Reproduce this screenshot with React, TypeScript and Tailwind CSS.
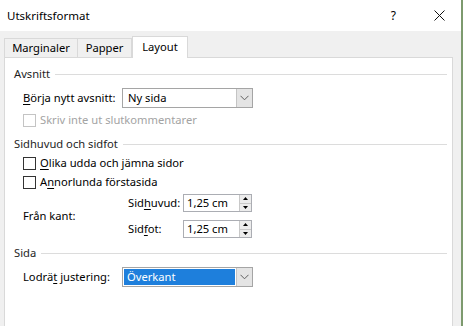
import React from 'react';

const font = { fontFamily: '"Noto Sans", "Liberation Sans", sans-serif' };

// Access-key underline letter
const U: React.FC<{ children: React.ReactNode }> = ({ children }) => (
    <span className="underline underline-offset-2 decoration-1">{children}</span>
);

const GroupHeader: React.FC<{ title: string }> = ({ title }) => (
    <div className="h-[16px] flex items-center pl-[9px] pr-[5px]">
        <span className="text-[#1e1e1e] whitespace-nowrap">{title}</span>
        <div className="flex-1 h-px bg-[#dcdcdc] ml-[5px]" />
    </div>
);

const Checkbox: React.FC<{ label: React.ReactNode; disabled?: boolean }> = ({ label, disabled }) => (
    <div className="h-[14px] flex items-center pl-[18px]">
        <div className={`w-[13px] h-[13px] shrink-0 border bg-white ${disabled ? 'border-[#c4c4c4]' : 'border-[#333333]'}`} />
        <span className={`ml-[4px] whitespace-nowrap ${disabled ? 'text-[#a3a3a3]' : 'text-black'}`}>{label}</span>
    </div>
);

const Chevron = () => (
    <svg width="9" height="6" viewBox="0 0 9 6" fill="none">
        <path d="M0.5 0.8 L4.5 4.8 L8.5 0.8" stroke="#606060" strokeWidth="1" />
    </svg>
);

const Select: React.FC<{ value: string; selected?: boolean }> = ({ value, selected }) => (
    <div className="w-[131px] h-[20px] shrink-0 border border-[#a5a5a5] bg-white flex">
        <div className="flex-1 flex items-center p-[1px]">
            {selected ? (
                <div className="h-full w-full bg-[#1e7fdc] text-white flex items-center pl-[3px]">{value}</div>
            ) : (
                <span className="pl-[4px]">{value}</span>
            )}
        </div>
        <div className="w-[16px] bg-[#e4e4e4] border-l border-[#c4c4c4] flex items-center justify-center">
            <Chevron />
        </div>
    </div>
);

const Spin: React.FC<{ value: string }> = ({ value }) => (
    <div className="w-[69px] h-[18px] shrink-0 border border-[#abadb3] bg-white flex">
        <span className="flex-1 pl-[3px] leading-[16px] whitespace-nowrap">{value}</span>
        <div className="w-[12px] flex flex-col border-l border-[#c8c8c8]">
            <div className="flex-1 bg-[#ececec] border-b border-[#c8c8c8] flex items-center justify-center">
                <svg width="5" height="3" viewBox="0 0 5 3"><path d="M0 3 L2.5 0 L5 3 Z" fill="#000" /></svg>
            </div>
            <div className="flex-1 bg-[#ececec] flex items-center justify-center">
                <svg width="5" height="3" viewBox="0 0 5 3"><path d="M0 0 L2.5 3 L5 0 Z" fill="#000" /></svg>
            </div>
        </div>
    </div>
);

export default function App() {
    return (
        <div className="w-[463px] h-[326px] flex overflow-hidden bg-white text-[11.2px] text-black" style={font}>
            <div className="flex-1 flex flex-col">
                {/* Title bar */}
                <div className="h-[31px] shrink-0 bg-white flex items-center pl-[7px]">
                    <span className="text-[11.5px]">Utskriftsformat</span>
                    <span className="ml-auto mr-[38px] text-[12px]">?</span>
                    <svg width="11" height="11" viewBox="0 0 11 11" className="mr-[16px]">
                        <path d="M0.5 0.5 L10.5 10.5 M10.5 0.5 L0.5 10.5" stroke="#111" strokeWidth="1" />
                    </svg>
                </div>

                <div className="flex-1 bg-[#f0f0f0] pl-[4px] pr-[8px] pt-[5px] flex flex-col">
                    {/* Tabs */}
                    <div className="flex items-end h-[22px] relative z-10 -mb-px">
                        <div className="w-[74px] h-[20px] border border-[#d9d9d9] border-b-0 flex items-center justify-center">Marginaler</div>
                        <div className="w-[54px] h-[20px] border-t border-r border-[#d9d9d9] flex items-center justify-center">Papper</div>
                        <div className="w-[56px] h-[22px] border border-[#d9d9d9] border-b-0 bg-white flex items-center justify-center pb-[1px]">Layout</div>
                    </div>

                    {/* Panel */}
                    <div className="flex-1 bg-white border border-[#d9d9d9] border-b-0 pt-[8px] flex flex-col">
                        <GroupHeader title="Avsnitt" />
                        <div className="mt-[6px] h-[20px] flex items-center pl-[18px]">
                            <span className="w-[99px] shrink-0 whitespace-nowrap"><U>B</U>örja nytt avsnitt:</span>
                            <Select value="Ny sida" />
                        </div>
                        <div className="mt-[5px]">
                            <Checkbox disabled label="Skriv inte ut slutkommentarer" />
                        </div>

                        <div className="mt-[9px]">
                            <GroupHeader title="Sidhuvud och sidfot" />
                        </div>
                        <div className="mt-[4px]">
                            <Checkbox label={<><U>O</U>lika udda och jämna sidor</>} />
                        </div>
                        <div className="mt-[5px]">
                            <Checkbox label={<>A<U>n</U>norlunda förstasida</>} />
                        </div>
                        <div className="mt-[5px] flex items-center pl-[18px]">
                            <span className="w-[105px] shrink-0 whitespace-nowrap">Från kant:</span>
                            <div className="flex flex-col gap-[8px]">
                                <div className="flex items-center h-[18px]">
                                    <span className="w-[55px] shrink-0 whitespace-nowrap">Sid<U>h</U>uvud:</span>
                                    <Spin value="1,25 cm" />
                                </div>
                                <div className="flex items-center h-[18px]">
                                    <span className="w-[55px] shrink-0 whitespace-nowrap">Sid<U>f</U>ot:</span>
                                    <Spin value="1,25 cm" />
                                </div>
                            </div>
                        </div>

                        <div className="mt-[7px]">
                            <GroupHeader title="Sida" />
                        </div>
                        <div className="mt-[6px] h-[20px] flex items-center pl-[18px]">
                            <span className="w-[99px] shrink-0 whitespace-nowrap">Lodrä<U>t</U> justering:</span>
                            <Select value="Överkant" selected />
                        </div>
                    </div>
                </div>
            </div>
            <div className="w-[2px] bg-[#7d9a6e]" />
        </div>
    );
}
